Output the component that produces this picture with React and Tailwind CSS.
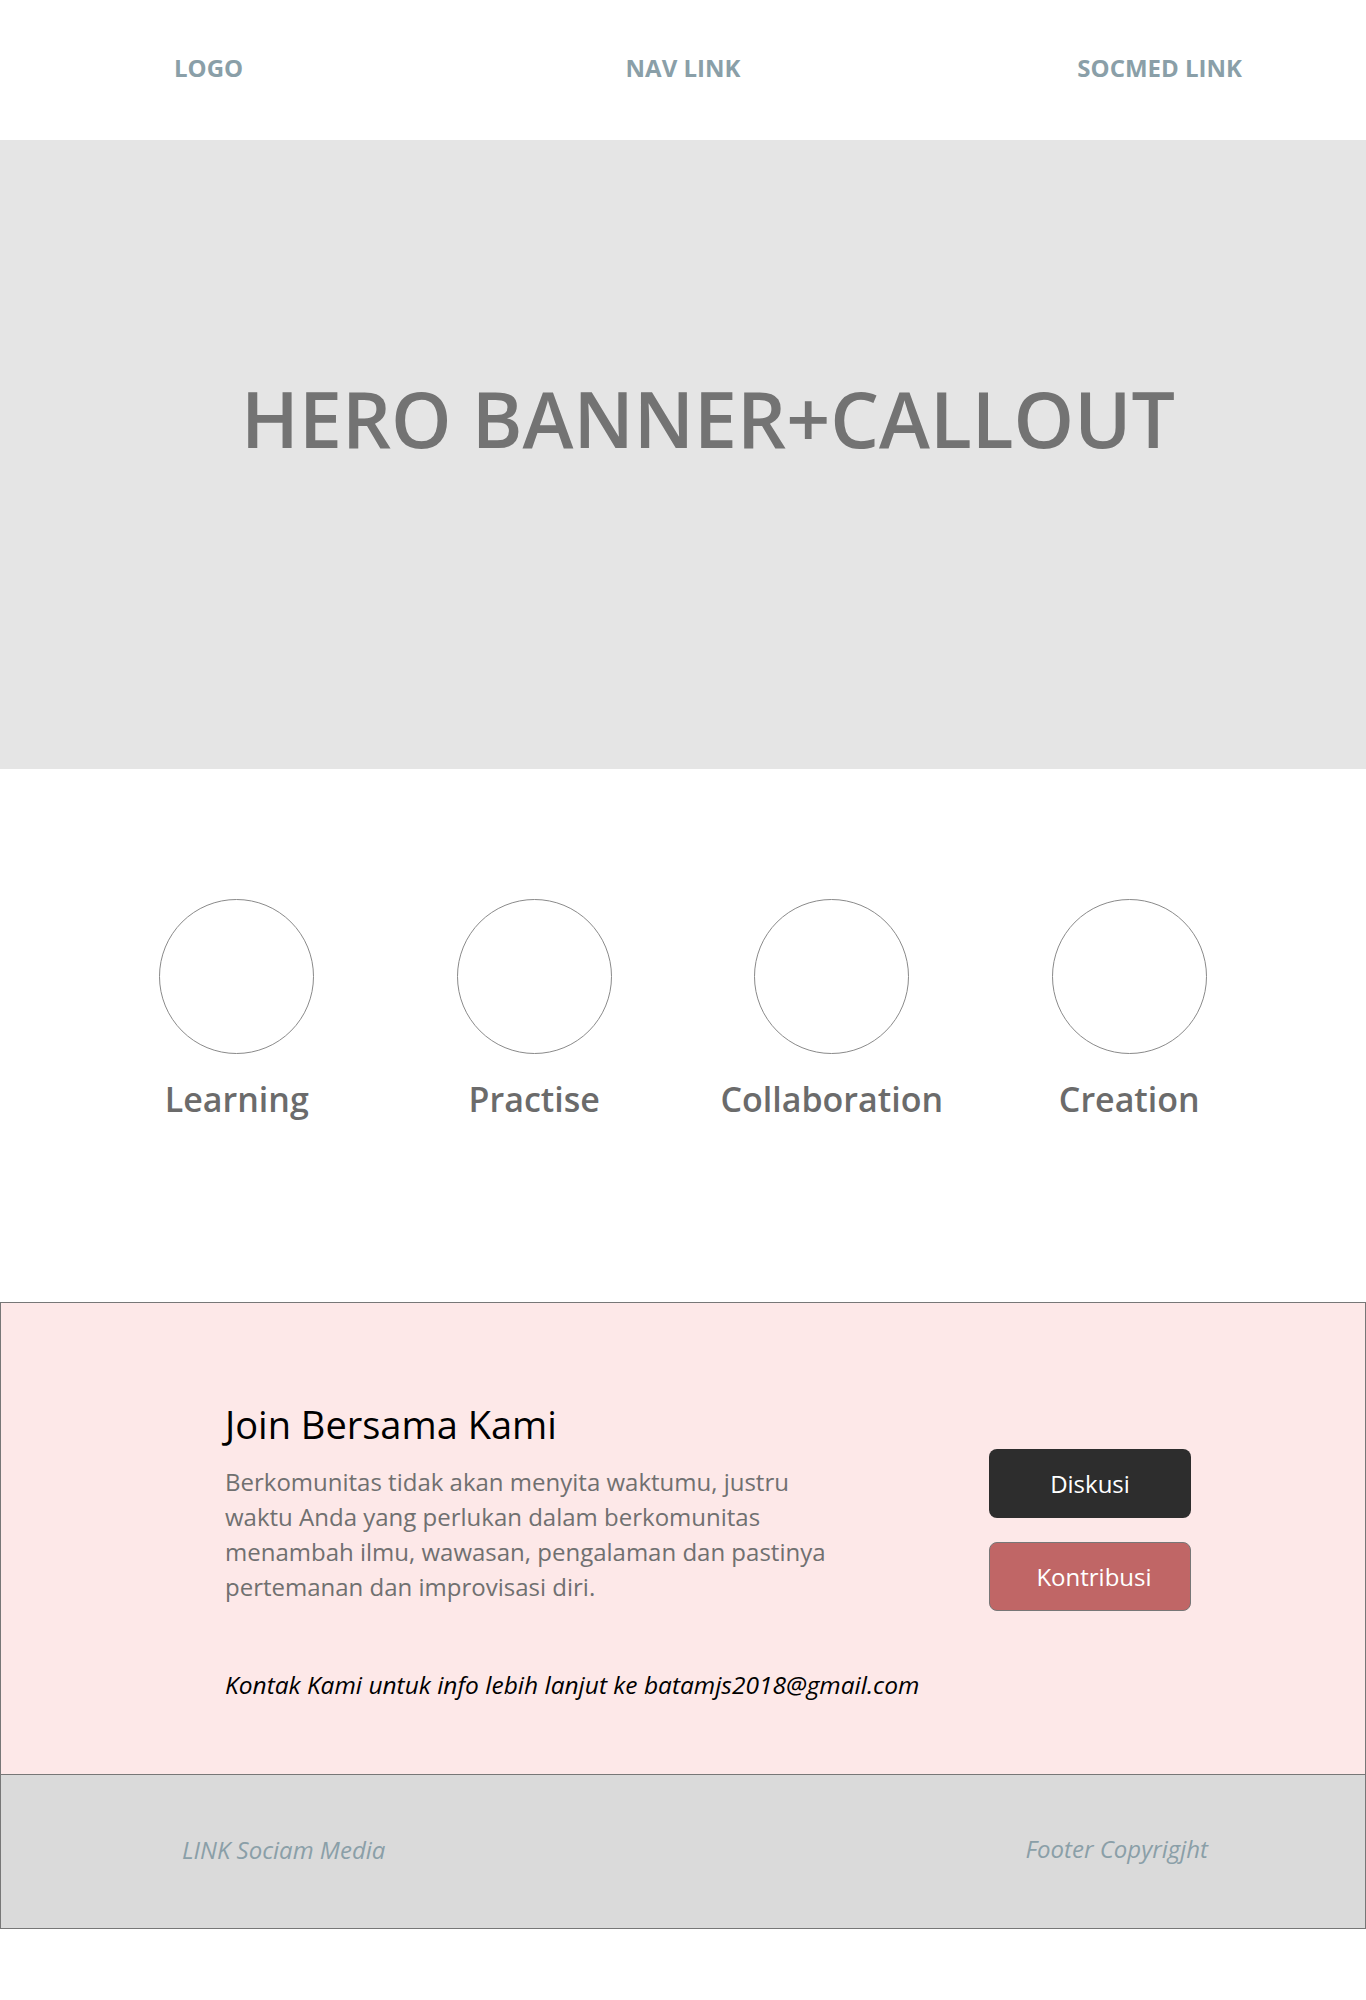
const features = ["Learning", "Practise", "Collaboration", "Creation"];

export default function App() {
  return (
    <div className="w-[1366px] bg-white font-['Open_Sans',sans-serif]">
      {/* header */}
      <header className="grid h-[140px] grid-cols-3 items-center pb-[4px] text-[24px] font-bold text-[#8a9fa8]">
        <div className="pl-[174px]">LOGO</div>
        <div className="text-center">NAV LINK</div>
        <div className="pr-[124px] text-right">SOCMED LINK</div>
      </header>

      {/* hero */}
      <section className="flex h-[629px] justify-center bg-[#e5e5e5] pl-[50px] pt-[240px]">
        <h1 className="text-[77px] font-semibold leading-none text-[#737373]">
          HERO BANNER+CALLOUT
        </h1>
      </section>

      {/* features */}
      <section className="h-[533px] pt-[130px]">
        <div className="mx-auto grid w-[1190px] grid-cols-4">
          {features.map((f) => (
            <div key={f} className="flex flex-col items-center">
              <div className="h-[155px] w-[155px] rounded-full border border-[#8a8a8a]" />
              <p className="mt-[20px] text-[34px] font-semibold text-[#6b6b6b]">{f}</p>
            </div>
          ))}
        </div>
      </section>

      {/* join */}
      <section className="h-[473px] border border-[#777] bg-[#fde8e8] pl-[224px] pr-[174px] pt-[94px]">
        <div className="flex justify-between">
          <div>
            <h2 className="text-[38px] leading-[54px] text-black">Join Bersama Kami</h2>
            <p className="mt-[13px] text-[24px] leading-[35px] text-[#707070]">
              Berkomunitas tidak akan menyita waktumu, justru
              <br />
              waktu Anda yang perlukan dalam berkomunitas
              <br />
              menambah ilmu, wawasan, pengalaman dan pastinya
              <br />
              pertemanan dan improvisasi diri.
            </p>
          </div>
          <div className="flex flex-col gap-[24px] pt-[52px]">
            <button className="h-[69px] w-[202px] rounded-[8px] bg-[#2d2d2d] text-[24px] text-white">
              Diskusi
            </button>
            <button className="h-[69px] w-[202px] rounded-[8px] border border-[#777] bg-[#c06666] pl-[8px] text-[24px] text-white">
              Kontribusi
            </button>
          </div>
        </div>
        <p className="mt-[56px] text-[24.5px] italic text-black">
          Kontak Kami untuk info lebih lanjut ke batamjs2018@gmail.com
        </p>
      </section>

      {/* footer */}
      <footer className="flex h-[154px] items-center justify-between border-x border-b border-[#777] bg-[#dadada] pb-[4px] pl-[181px] pr-[157px] text-[24px] italic text-[#8a9fa8]">
        <span>LINK Sociam Media</span>
        <span className="-mt-[2px]">Footer Copyrigjht</span>
      </footer>
    </div>
  );
}
